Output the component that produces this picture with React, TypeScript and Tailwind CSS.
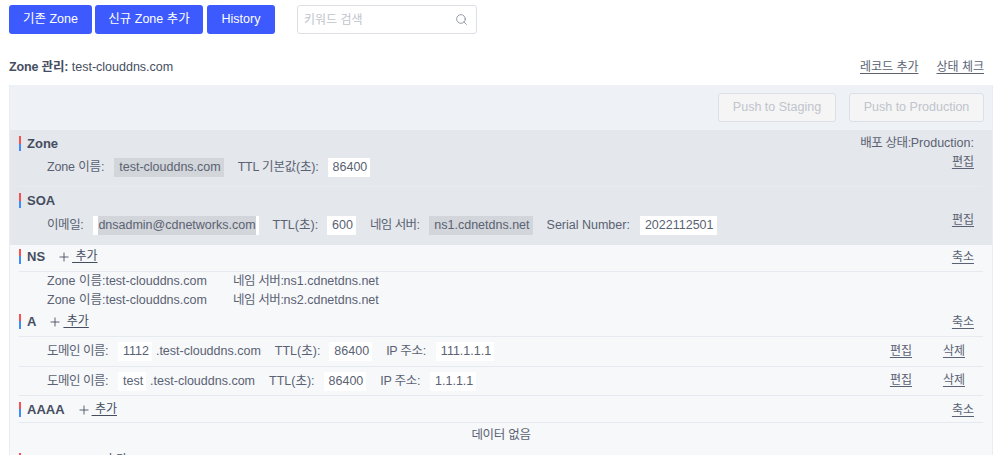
import { Plus, Search } from 'lucide-react';

function Title({ label, add }: { label: string; add?: boolean }) {
  return (
    <div className="flex items-center h-[15px]">
      <span className="w-[2px] h-[15px] bg-[linear-gradient(#fb4e4e_50%,#3f8cff_50%)]" />
      <span className="ml-[6px] text-[13px] leading-[15px] font-bold text-[#454e5f]">{label}</span>
      {add && (
        <a className="ml-[12px] flex items-center text-[12px] leading-[15px] text-[#454e5f]">
          <Plus size={14} strokeWidth={1.5} />
          <span className="ml-[1px] underline underline-offset-2">&nbsp;추가</span>
        </a>
      )}
    </div>
  );
}

function Link({ children, className }: { children: string; className?: string }) {
  return <a className={`underline underline-offset-2 text-[12px] leading-[16px] text-[#5a6273] ${className ?? ''}`}>{children}</a>;
}

function Val({ children, gray, className }: { children: string; gray?: boolean; className?: string }) {
  return (
    <span className={`inline-block h-[19px] leading-[19px] pl-[5px] pr-[3px] ${gray ? 'bg-[#d2d5d9]' : 'bg-white'} ${className ?? ''}`}>
      {children}
    </span>
  );
}

export default function App() {
  return (
    <div
      className="h-[455px] overflow-hidden bg-white px-[9px] pt-[5px] text-[12.5px] text-[#5a6273]"
      style={{ fontFamily: '"Liberation Sans", "Noto Sans CJK KR", sans-serif' }}
    >
      <div className="flex items-center">
        <button className="w-[83px] h-[29px] rounded-[3px] bg-[#3d5afe] text-white text-[12.5px]">기존 Zone</button>
        <button className="ml-[3px] w-[108px] h-[29px] rounded-[3px] bg-[#3d5afe] text-white text-[12.5px]">신규 Zone 추가</button>
        <button className="ml-[4px] w-[68px] h-[29px] rounded-[3px] bg-[#3d5afe] text-white text-[12.5px]">History</button>
        <div className="ml-[22px] w-[180px] h-[29px] rounded-[3px] border border-[#dcdfe6] flex items-center justify-between pl-[6px] pr-[8px]">
          <span className="text-[#c0c4cc] text-[12px]">키워드 검색</span>
          <Search size={13} strokeWidth={1.5} className="text-[#7f8590]" />
        </div>
      </div>

      <div className="mt-[24px] flex items-center justify-between h-[18px] pr-[7px]">
        <div className="text-[#454e5f] text-[12.5px]">
          <b className="tracking-[-0.15px]">Zone 관리:</b> test-clouddns.com
        </div>
        <div className="flex gap-[18px]">
          <Link>레코드 추가</Link>
          <Link>상태 체크</Link>
        </div>
      </div>

      <div className="mt-[9px] w-[984px] border-x border-[#e9edf3] bg-[#f7f8fa]">
        <div className="h-[45px] bg-[#eef1f6] flex items-center justify-end gap-[13px] pr-[8px]">
          <button className="w-[118px] h-[29px] rounded-[3px] border border-[#dcdfe6] bg-[#f5f5f5] text-[#c0c4cc] text-[12.5px]">Push to Staging</button>
          <button className="w-[135px] h-[29px] rounded-[3px] border border-[#dcdfe6] bg-[#f5f5f5] text-[#c0c4cc] text-[12.5px]">Push to Production</button>
        </div>

        <div className="h-[115px] bg-[#e4e7eb]">
          <div className="mx-[9px] h-[57px] pt-[6px] border-b border-[#e9ebee] relative">
            <Title label="Zone" />
            <div className="mt-[7px] pl-[28px] flex items-center">
              <span className="tracking-[-0.15px]">Zone 이름:</span>
              <Val gray className="ml-[10px]">test-clouddns.com</Val>
              <span className="ml-[14px] tracking-[-0.2px]">TTL 기본값(초):</span>
              <Val className="ml-[9px]">86400</Val>
            </div>
            <div className="absolute right-[9px] top-[5px] flex flex-col items-end">
              <span className="leading-[16px]"><span className="tracking-[-0.4px]">배포 상태:</span>Production:</span>
              <Link className="mt-[3px]">편집</Link>
            </div>
          </div>
          <div className="mx-[9px] pt-[6px] relative">
            <Title label="SOA" />
            <div className="mt-[8px] pl-[28px] flex items-center">
              <span className="tracking-[-0.4px]">이메일:</span>
              <span className="ml-[10px] inline-block h-[19px] leading-[19px] pl-[5px] pr-[3px] bg-white">
                <span className="inline-block bg-[#d2d5d9]">dnsadmin@cdnetworks.com</span>
              </span>
              <span className="ml-[14px]">TTL(초):</span>
              <Val className="ml-[9px]">600</Val>
              <span className="ml-[14px] tracking-[-0.6px]">네임 서버:</span>
              <Val gray className="ml-[10px]">ns1.cdnetdns.net</Val>
              <span className="ml-[14px]">Serial Number:</span>
              <Val className="ml-[10px]">2022112501</Val>
            </div>
            <Link className="absolute right-[9px] top-[25px]">편집</Link>
          </div>
        </div>

        <div className="mx-[9px] h-[27px] pt-[4px] border-b border-[#e6e9f0] flex justify-between">
          <Title label="NS" add />
          <Link className="mr-[9px]">축소</Link>
        </div>
        <div className="pl-[37px] flex leading-[19px] h-[19px] items-center">
          <span className="w-[186px]">Zone 이름:test-clouddns.com</span>
          <span><span className="tracking-[-0.4px]">네임 서버:</span>ns1.cdnetdns.net</span>
        </div>
        <div className="pl-[37px] flex leading-[19px] h-[19px] items-center">
          <span className="w-[186px]">Zone 이름:test-clouddns.com</span>
          <span><span className="tracking-[-0.4px]">네임 서버:</span>ns2.cdnetdns.net</span>
        </div>

        <div className="mx-[9px] h-[27px] pt-[4px] border-b border-[#e6e9f0] flex justify-between">
          <Title label="A" add />
          <Link className="mr-[9px]">축소</Link>
        </div>
        <div className="mx-[9px] h-[30px] border-b border-[#e6e9f0] flex items-center pl-[28px] relative">
          <span className="tracking-[-0.5px]">도메인 이름:</span>
          <Val className="ml-[10px]">1112</Val>
          <span className="ml-[4px]">.test-clouddns.com</span>
          <span className="ml-[14px]">TTL(초):</span>
          <Val className="ml-[9px]">86400</Val>
          <span className="ml-[14px] tracking-[-0.3px]">IP 주소:</span>
          <Val className="ml-[10px]">111.1.1.1</Val>
          <Link className="absolute right-[71px] top-[6px]">편집</Link>
          <Link className="absolute right-[18px] top-[6px]">삭제</Link>
        </div>
        <div className="mx-[9px] h-[29px] border-b border-[#e6e9f0] flex items-center pl-[28px] relative">
          <span className="tracking-[-0.5px]">도메인 이름:</span>
          <Val className="ml-[10px]">test</Val>
          <span className="ml-[4px]">.test-clouddns.com</span>
          <span className="ml-[14px]">TTL(초):</span>
          <Val className="ml-[9px]">86400</Val>
          <span className="ml-[14px] tracking-[-0.3px]">IP 주소:</span>
          <Val className="ml-[10px]">1.1.1.1</Val>
          <Link className="absolute right-[71px] top-[5px]">편집</Link>
          <Link className="absolute right-[18px] top-[5px]">삭제</Link>
        </div>

        <div className="mx-[9px] h-[27px] pt-[6px] border-b border-[#e6e9f0] flex justify-between">
          <Title label="AAAA" add />
          <Link className="mr-[9px]">축소</Link>
        </div>
        <div className="h-[24px] flex items-center justify-center tracking-[-0.3px]">데이터 없음</div>
        <div className="mx-[9px] mt-[6px] h-[27px] flex justify-between">
          <Title label="CNAME" add />
        </div>
      </div>
    </div>
  );
}
